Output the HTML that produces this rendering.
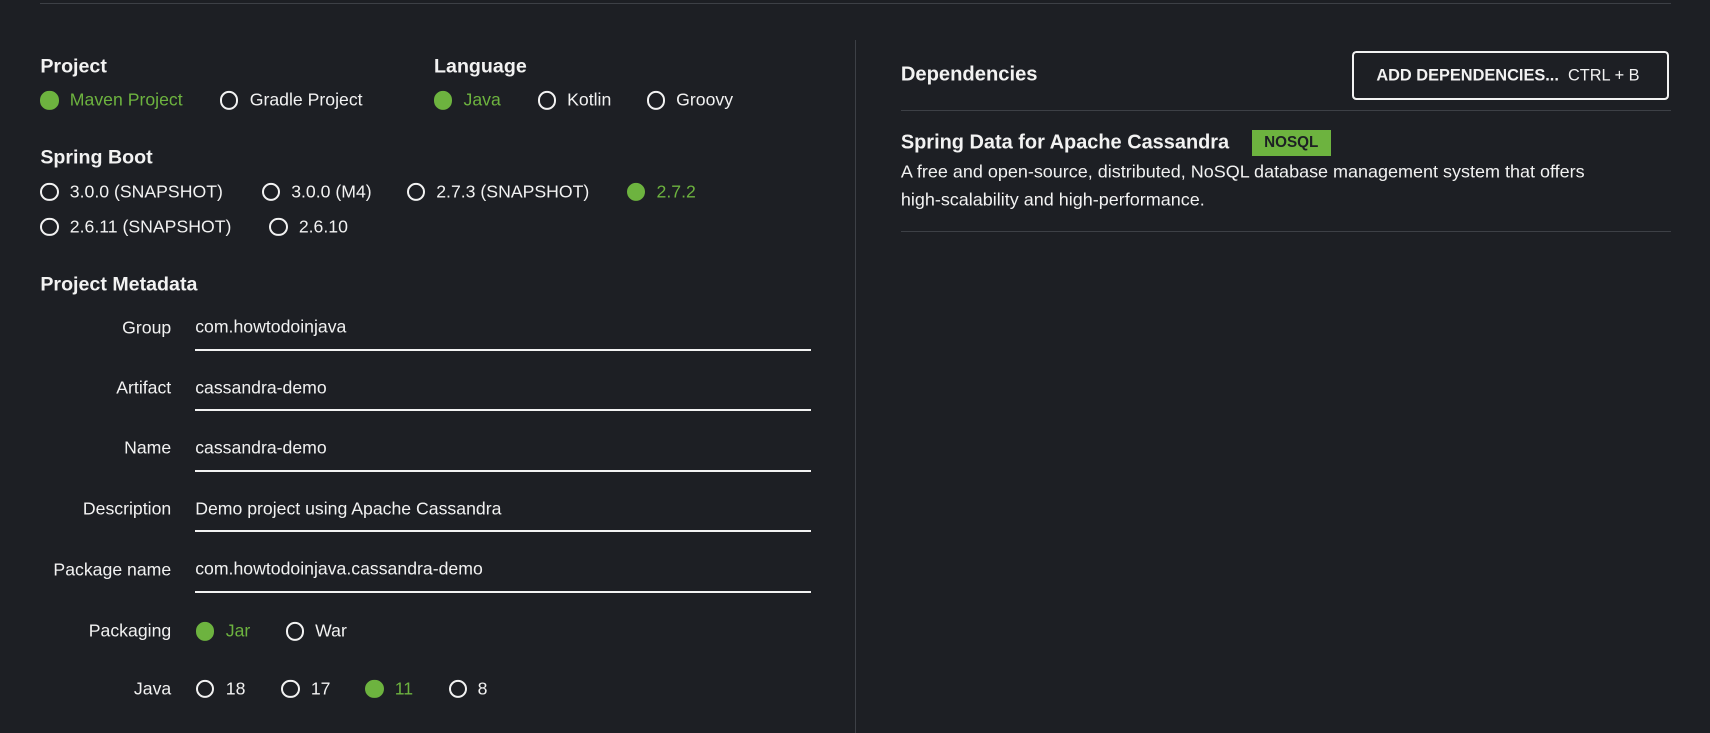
<!DOCTYPE html>
<html><head><meta charset="utf-8"><style>
html,body{margin:0;padding:0;background:#1d1f24;overflow:hidden}
body{width:1710px;height:733px}
#w{zoom:1.0906;position:relative;width:1568px;height:672px;font-family:"Liberation Sans",Arial,sans-serif;color:#f2f2f2}
.a{position:absolute;white-space:nowrap}
.h{font-weight:bold;font-size:18px;transform:translateY(-50%)}
.t{font-size:16.2px;transform:translateY(-50%)}
.g{color:#6db33f}
.r{position:absolute;width:13px;height:13px;border:2px solid #f2f2f2;border-radius:50%;transform:translateY(-50%)}
.r.on{background:#6db33f;border-color:#6db33f}
.l{position:absolute;font-size:16.2px;transform:translateY(-50%);text-align:right;width:157px;left:0}
.u{position:absolute;left:179px;width:565px;height:2px;background:#f2f2f2}
.hr{position:absolute;height:1px;background:#3d4046}
</style></head><body><div id="w">
<div class="hr" style="left:37px;top:3px;width:1495px"></div>
<div class="a" style="left:784px;top:37px;width:1px;height:640px;background:#3d4046"></div>

<div class="a h" style="left:37px;top:61px">Project</div>
<div class="a h" style="left:398px;top:61px">Language</div>
<div class="r on" style="left:37px;top:92px"></div><div class="a t g" style="left:64px;top:92px">Maven Project</div>
<div class="r" style="left:202px;top:92px"></div><div class="a t" style="left:229px;top:92px">Gradle Project</div>
<div class="r on" style="left:398px;top:92px"></div><div class="a t g" style="left:425px;top:92px">Java</div>
<div class="r" style="left:493px;top:92px"></div><div class="a t" style="left:520px;top:92px">Kotlin</div>
<div class="r" style="left:593px;top:92px"></div><div class="a t" style="left:620px;top:92px">Groovy</div>

<div class="a h" style="left:37px;top:145px">Spring Boot</div>
<div class="r" style="left:37px;top:176px"></div><div class="a t" style="left:64px;top:176px">3.0.0 (SNAPSHOT)</div>
<div class="r" style="left:240px;top:176px"></div><div class="a t" style="left:267px;top:176px">3.0.0 (M4)</div>
<div class="r" style="left:373px;top:176px"></div><div class="a t" style="left:400px;top:176px">2.7.3 (SNAPSHOT)</div>
<div class="r on" style="left:575px;top:176px"></div><div class="a t g" style="left:602px;top:176px">2.7.2</div>
<div class="r" style="left:37px;top:208px"></div><div class="a t" style="left:64px;top:208px">2.6.11 (SNAPSHOT)</div>
<div class="r" style="left:247px;top:208px"></div><div class="a t" style="left:274px;top:208px">2.6.10</div>

<div class="a h" style="left:37px;top:261px">Project Metadata</div>
<div class="l" style="top:301px">Group</div><div class="a t" style="left:179px;top:300px">com.howtodoinjava</div><div class="u" style="top:320px"></div>
<div class="l" style="top:356px">Artifact</div><div class="a t" style="left:179px;top:356px">cassandra-demo</div><div class="u" style="top:375px"></div>
<div class="l" style="top:411px">Name</div><div class="a t" style="left:179px;top:411px">cassandra-demo</div><div class="u" style="top:431px"></div>
<div class="l" style="top:467px">Description</div><div class="a t" style="left:179px;top:467px">Demo project using Apache Cassandra</div><div class="u" style="top:486px"></div>
<div class="l" style="top:523px">Package name</div><div class="a t" style="left:179px;top:522px">com.howtodoinjava.cassandra-demo</div><div class="u" style="top:542px"></div>
<div class="l" style="top:579px">Packaging</div>
<div class="r on" style="left:180px;top:579px"></div><div class="a t g" style="left:207px;top:579px">Jar</div>
<div class="r" style="left:262px;top:579px"></div><div class="a t" style="left:289px;top:579px">War</div>
<div class="l" style="top:632px">Java</div>
<div class="r" style="left:180px;top:632px"></div><div class="a t" style="left:207px;top:632px">18</div>
<div class="r" style="left:258px;top:632px"></div><div class="a t" style="left:285px;top:632px">17</div>
<div class="r on" style="left:335px;top:632px"></div><div class="a t g" style="left:362px;top:632px">11</div>
<div class="r" style="left:412px;top:632px"></div><div class="a t" style="left:438px;top:632px">8</div>

<div class="a h" style="left:826px;top:69px;font-size:18.5px">Dependencies</div>
<div class="a" style="left:1240px;top:47px;width:287px;height:41px;border:2px solid #f2f2f2;border-radius:4px"></div>
<div class="a t" style="left:1262px;top:70px;font-size:15px"><b>ADD DEPENDENCIES...</b>&nbsp; CTRL + B</div>
<div class="hr" style="left:826px;top:101px;width:706px"></div>
<div class="a t" style="left:826px;top:131px;font-weight:bold;font-size:18.3px">Spring Data for Apache Cassandra</div>
<div class="a" style="left:1148px;top:119px;width:72px;height:24px;background:#6db33f;color:#1d1f24;font-size:14px;font-weight:bold;line-height:24px;text-align:center">NOSQL</div>
<div class="a t" style="left:826px;top:158px;font-size:16.5px">A free and open-source, distributed, NoSQL database management system that offers</div>
<div class="a t" style="left:826px;top:183px;font-size:16.5px">high-scalability and high-performance.</div>
<div class="hr" style="left:826px;top:212px;width:706px"></div>
</div></body></html>
